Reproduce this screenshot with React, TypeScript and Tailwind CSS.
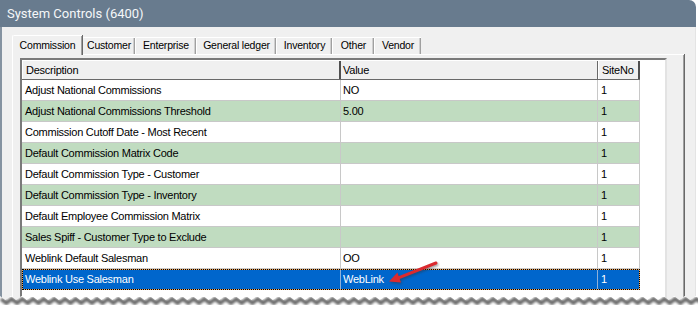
const rows: [string, string][] = [
  ["Adjust National Commissions", "NO"],
  ["Adjust National Commissions Threshold", "5.00"],
  ["Commission Cutoff Date - Most Recent", ""],
  ["Default Commission Matrix Code", ""],
  ["Default Commission Type - Customer", ""],
  ["Default Commission Type - Inventory", ""],
  ["Default Employee Commission Matrix", ""],
  ["Sales Spiff - Customer Type to Exclude", ""],
  ["Weblink Default Salesman", "OO"],
  ["Weblink Use Salesman", "WebLink"],
]

const tabs = [
  { label: "Customer", w: "w-[53px]" },
  { label: "Enterprise", w: "w-[61px]" },
  { label: "General ledger", w: "w-[80px]" },
  { label: "Inventory", w: "w-[56px]" },
  { label: "Other", w: "w-[42px]" },
  { label: "Vendor", w: "w-[47px]" },
]

// zigzag torn edge along the bottom
function tornPoints() {
  const pts: string[] = []
  for (let i = 0; i <= 66; i++) {
    const x = i * 10.7
    pts.push(`${x},296`, `${x + 5.35},300`)
  }
  return pts.join(" ")
}

export default function App() {
  const zig = tornPoints()

  return (
    <div className="relative w-[698px] h-[309px] overflow-hidden bg-white font-['Liberation_Sans',Arial,sans-serif] text-black">
      <div className="flex flex-col w-[696px] h-[309px]">
        <div className="h-[27px] shrink-0 flex items-center pl-[7px] bg-[#687b8e] rounded-tr-[7px] text-[13px] text-[#f5f7f9] font-['Roboto',sans-serif]">
          System Controls (6400)
        </div>

        <div className="flex-1 bg-[#f0f0f0] border-l-2 border-[#8593a1] border-r border-r-[#e4e4e4] pl-[10px] pt-[8px]">
          {/* tab strip */}
          <div className="flex items-end h-[19px] text-[10.5px] tracking-[-0.2px]">
            <div className="relative z-10 w-[70px] h-[20px] -mb-px flex items-center justify-center bg-[#f0f0f0] border-t border-l border-white rounded-tl-[2px] shadow-[inset_-1px_0_#a0a0a0,1px_0_#696969]">
              Commission
            </div>
            {tabs.map((t) => (
              <div
                key={t.label}
                className={`${t.w} h-[17px] flex items-center justify-center border-t border-l border-white rounded-tl-[2px] shadow-[inset_-1px_0_#a0a0a0,inset_-2px_0_#cfcfcf]`}
              >
                {t.label}
              </div>
            ))}
          </div>

          {/* tab panel */}
          <div className="w-[672px] h-[260px] border-t border-l border-white shadow-[inset_-1px_0_#a0a0a0,1px_0_#696969] pl-[7px] pt-[3px]">
            <div className="w-[647px] h-[250px] bg-white border-2 border-t-[#7a7a7a] border-l-[#7a7a7a] border-r-[#e3e3e3] border-b-[#e3e3e3] text-[11px] tracking-[-0.25px]">
              {/* header */}
              <div className="flex h-[20px] w-[618px] bg-[#f0f0f0] border-b border-[#696969]">
                <div className="w-[319px] flex items-center pl-[3px] border-t border-l border-white shadow-[inset_-2px_0_#505050]">
                  Description
                </div>
                <div className="w-[257px] flex items-center pl-[2px] border-t border-white shadow-[inset_-1px_0_#696969]">
                  Value
                </div>
                <div className="w-[42px] flex items-center pl-[3px] border-t border-l border-white shadow-[inset_-2px_0_#505050]">
                  SiteNo
                </div>
              </div>

              {rows.map(([d, v], i) => {
                const last = i === rows.length - 1
                if (last) {
                  return (
                    <div key={d} className="h-[21px] w-[618px] border border-dotted border-black bg-[#f2a65a]">
                      <div className="flex h-full bg-[#0066cc] text-white">
                        <div className="w-[318px] flex items-center pl-[2px] border-r border-[#8fb0d8]">{d}</div>
                        <div className="w-[257px] flex items-center pl-[2px] border-r border-[#8fb0d8]">{v}</div>
                        <div className="w-[41px] flex items-center pl-[3px]">1</div>
                      </div>
                    </div>
                  )
                }
                return (
                  <div
                    key={d}
                    className={`flex h-[21px] w-[618px] border-b border-[#c8c8c8] ${i % 2 === 1 ? "bg-[#c0dcc0]" : "bg-white"}`}
                  >
                    <div className="w-[319px] flex items-center pl-[3px] border-r border-[#c8c8c8]">{d}</div>
                    <div className="w-[257px] flex items-center pl-[2px] border-r border-[#c8c8c8]">{v}</div>
                    <div className="w-[42px] flex items-center pl-[3px] border-r border-[#c8c8c8]">1</div>
                  </div>
                )
              })}
            </div>
          </div>
        </div>
      </div>

      {/* torn edge and callout arrow */}
      <svg className="absolute inset-0 pointer-events-none" width="698" height="309" viewBox="0 0 698 309">
        <defs>
          <filter id="soft" x="-10%" y="-50%" width="120%" height="200%">
            <feGaussianBlur stdDeviation="1.2" />
          </filter>
          <clipPath id="below">
            <polygon points={`0,296 ${zig} 710,309 0,309`} />
          </clipPath>
          <filter id="ashadow" x="-20%" y="-20%" width="140%" height="160%">
            <feGaussianBlur stdDeviation="0.8" />
          </filter>
        </defs>
        <polygon points={`0,296 ${zig} 710,309 0,309`} fill="#ffffff" />
        <g clipPath="url(#below)">
          <polyline points={zig} transform="translate(1 3)" fill="none" stroke="#6e6e6e" strokeWidth="4" filter="url(#soft)" />
        </g>

        <g transform="translate(1 1.5)" opacity="0.45" filter="url(#ashadow)">
          <line x1="436" y1="263" x2="399" y2="277.6" stroke="#333" strokeWidth="3" strokeLinecap="round" />
          <polygon points="389,281.5 401,282.4 397.4,272.6" fill="#333" />
        </g>
        <line x1="436" y1="263" x2="399" y2="277.6" stroke="#db2a2f" strokeWidth="3" strokeLinecap="round" />
        <polygon points="389,281.5 401,282.4 397.4,272.6" fill="#db2a2f" />
      </svg>
    </div>
  )
}
